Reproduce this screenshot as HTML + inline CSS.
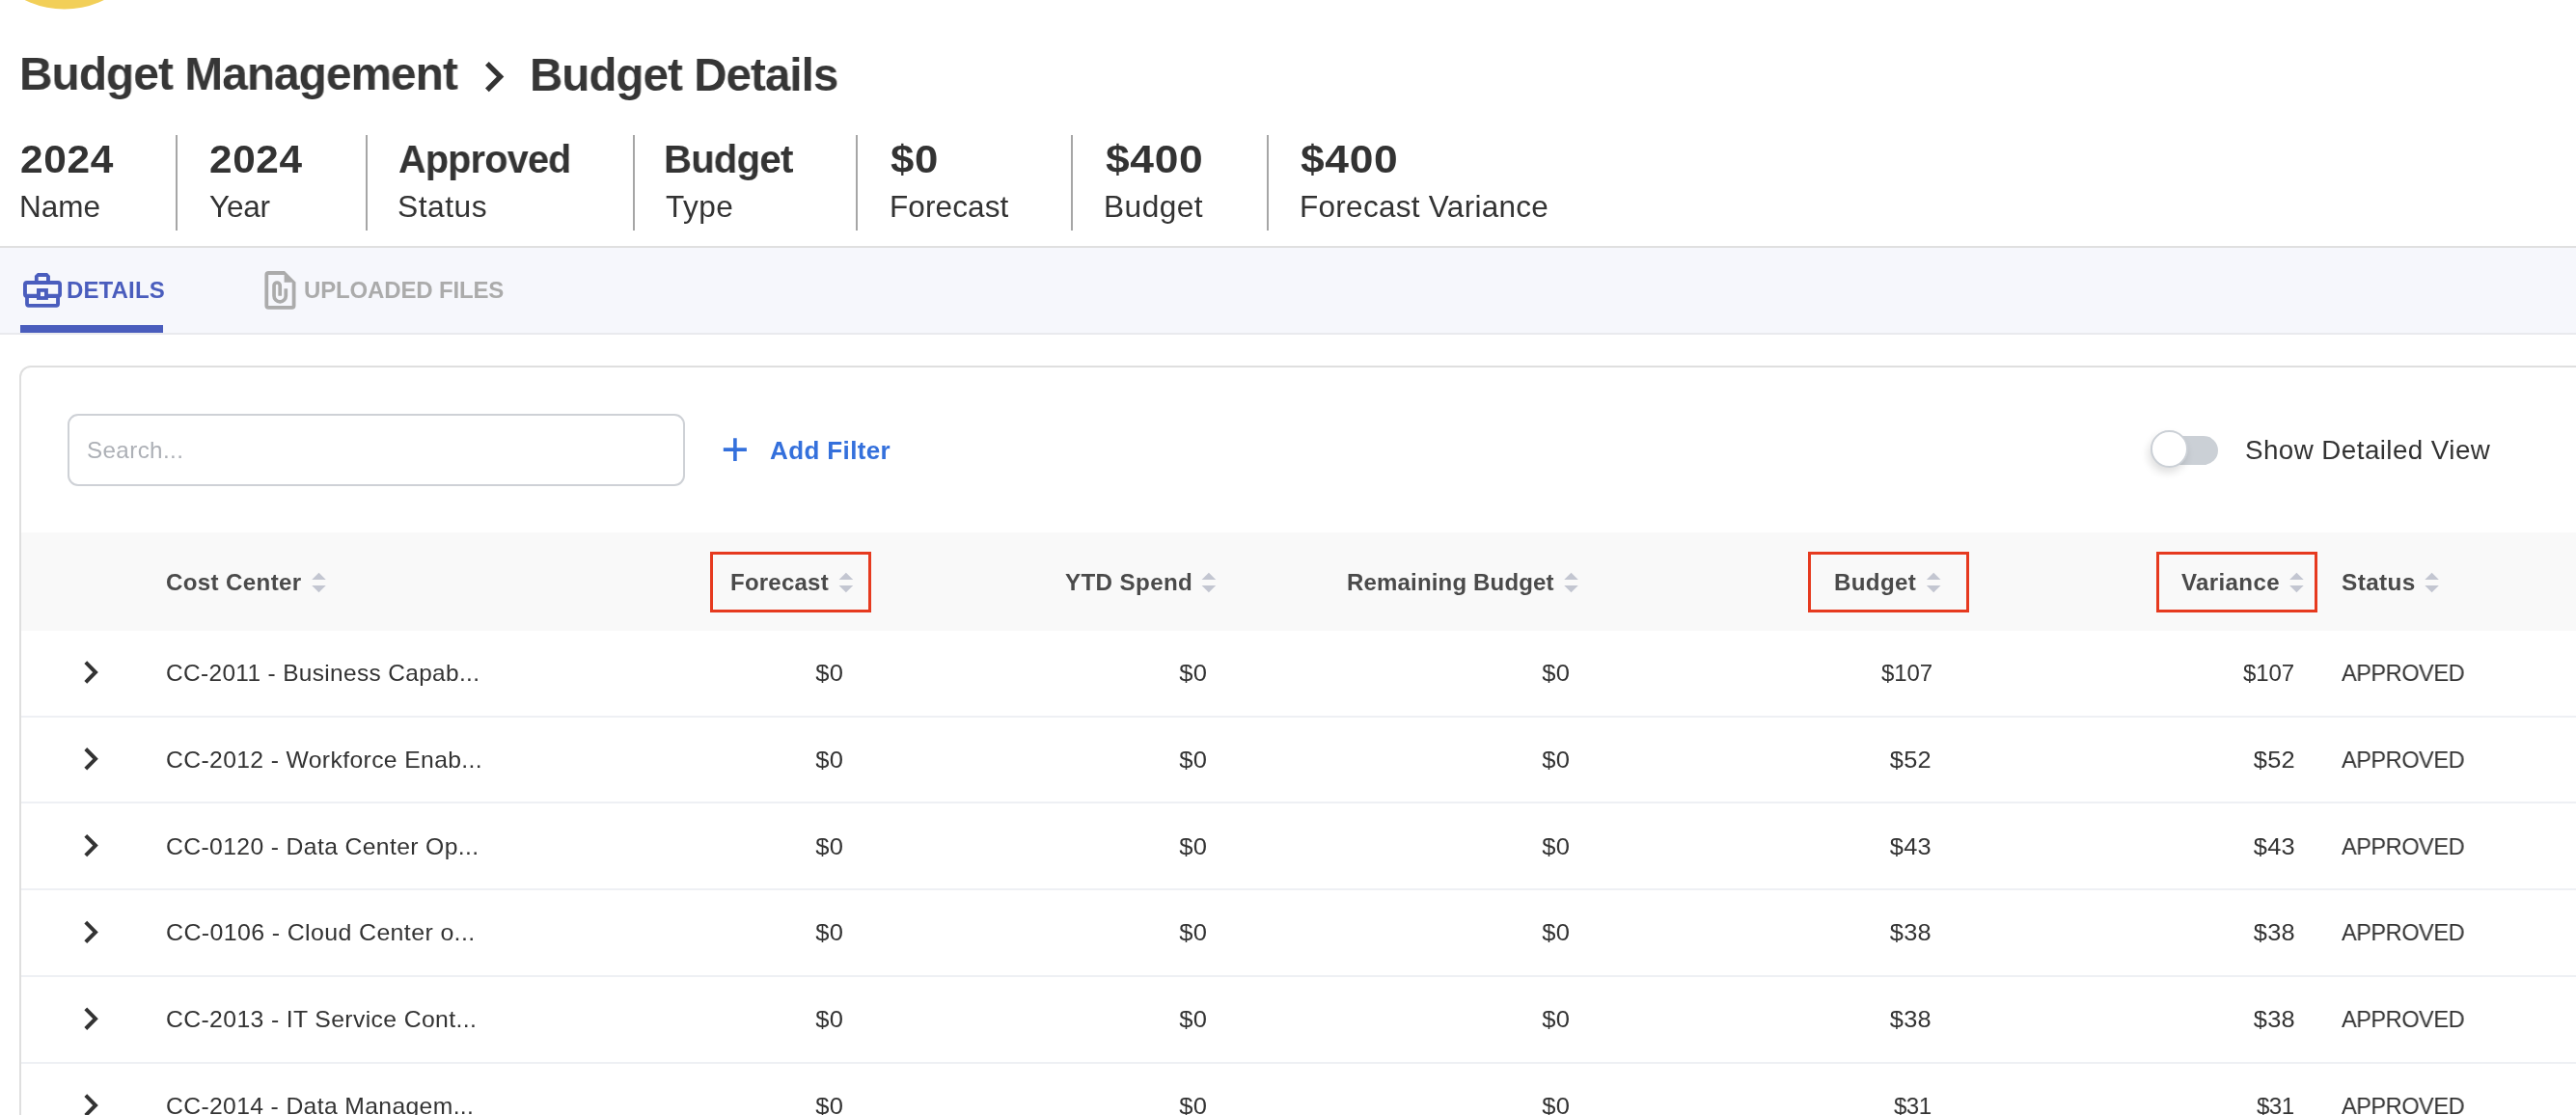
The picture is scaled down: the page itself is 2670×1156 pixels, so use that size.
<!DOCTYPE html>
<html><head><meta charset="utf-8"><style>
html,body{margin:0;padding:0;}
body{width:2670px;height:1156px;overflow:hidden;position:relative;background:#fff;font-family:"Liberation Sans",sans-serif;}
.tx{position:absolute;line-height:1;white-space:nowrap;will-change:transform;}
.sep{position:absolute;top:140px;height:99px;width:2px;background:#A6A6A6;}
.ov{position:absolute;left:0;top:0;}
#topline{position:absolute;left:0;top:255px;width:2670px;height:2px;background:#E0E0E0;}
#tabbar{position:absolute;left:0;top:257px;width:2670px;height:88px;background:#F6F7FC;}
#tabbot{position:absolute;left:0;top:345px;width:2670px;height:2px;background:#E9EAEE;}
#uline{position:absolute;left:21px;top:337px;width:148px;height:8px;background:#4A5DBD;}
#card{position:absolute;left:20px;top:379px;width:2700px;height:900px;border:2px solid #DFDFDF;border-radius:12px;box-sizing:border-box;}
#search{position:absolute;left:70px;top:429px;width:640px;height:75px;border:2px solid #CED1D6;border-radius:11px;box-sizing:border-box;}
#track{position:absolute;left:2233px;top:452px;width:66px;height:30px;border-radius:15px;background:#CBD0D6;}
#knob{position:absolute;left:2229px;top:446px;width:38.5px;height:38.5px;border-radius:50%;background:#fff;border:2px solid #CBD0D6;box-sizing:border-box;box-shadow:-2px 5px 9px rgba(0,0,0,0.13);}
#thead{position:absolute;left:22px;top:552px;width:2648px;height:102px;background:#F9F9F9;}
.rbox{position:absolute;top:572px;width:167px;height:63px;border:3px solid #E63A1F;box-sizing:border-box;}
</style></head><body>
<div id="topline"></div>
<div id="tabbar"></div>
<div id="tabbot"></div>
<div id="uline"></div>
<div id="card"></div>
<div id="search"></div>
<div id="track"></div>
<div id="knob"></div>
<div id="thead"></div>

<div class="sep" style="left:182px"></div><div class="sep" style="left:379px"></div><div class="sep" style="left:656px"></div><div class="sep" style="left:887px"></div><div class="sep" style="left:1110px"></div><div class="sep" style="left:1313px"></div>
<div class="rbox" style="left:736px"></div>
<div class="rbox" style="left:1874px"></div>
<div class="rbox" style="left:2235px"></div>
<svg class="ov" width="2670" height="1156" viewBox="0 0 2670 1156">
<circle cx="66.75" cy="-83.4" r="93" fill="#F2CF58"/>
<path d="M504.9 65.8 L518.6 79.6 L504.9 93.4" fill="none" stroke="#333" stroke-width="5.3"/>
<g fill="#4A5DBD" fill-rule="evenodd">
<path d="M39 283.1 L49 283.1 L51.9 286 L51.9 292 L48 292 L48 286.9 L39.7 286.9 L39.7 292 L35.9 292 L35.9 286 Z"/>
<path d="M28 290.9 L60 290.9 Q64 290.9 64 294.9 L64 304.9 Q64 308.9 60 308.9 L28 308.9 Q24 308.9 24 304.9 L24 294.9 Q24 290.9 28 290.9 Z M27.9 294.9 L27.9 304.8 L60.2 304.8 L60.2 294.9 Z"/>
<path d="M26.1 306 L29.9 306 L29.9 314.9 L58.1 314.9 L58.1 306 L62 306 L62 315 Q62 318.7 58.3 318.7 L29.8 318.7 Q26.1 318.7 26.1 315 Z"/>
<path d="M38 299 L49.9 299 L49.9 310.9 L38 310.9 Z"/>
</g><rect x="42" y="302.8" width="4" height="4.3" fill="#F6F7FC"/>
<path fill="#ABABAB" fill-rule="evenodd" d="M278.4 281.05 L295 281.05 L306.5 292.55 L306.5 316.7 Q306.5 320.7 302.5 320.7 L278.4 320.7 Q274.4 320.7 274.4 316.7 L274.4 285.05 Q274.4 281.05 278.4 281.05 Z M278.2 284.9 L294.6 284.9 L294.6 292.7 L302.7 292.7 L302.7 316.9 L278.2 316.9 Z"/>
<path d="M290.2 306.8 L290.2 295.9 A3.08 3.08 0 0 0 284.05 295.9 L284.05 306.7 A6.12 6.12 0 0 0 296.3 306.7 L296.3 299.2" fill="none" stroke="#ABABAB" stroke-width="3.7"/>
<path d="M761.9 454.3 L761.9 477.9 M749.8 466.1 L773.9 466.1" stroke="#3470DC" stroke-width="3.6"/>
<path d="M323.20 601.00 L330.50 593.70 L337.80 601.00 Z M323.20 607.00 L337.80 607.00 L330.50 614.30 Z" fill="#C3C6D1"/><path d="M869.60 601.00 L876.90 593.70 L884.20 601.00 Z M869.60 607.00 L884.20 607.00 L876.90 614.30 Z" fill="#C3C6D1"/><path d="M1245.60 601.00 L1252.90 593.70 L1260.20 601.00 Z M1245.60 607.00 L1260.20 607.00 L1252.90 614.30 Z" fill="#C3C6D1"/><path d="M1621.20 601.00 L1628.50 593.70 L1635.80 601.00 Z M1621.20 607.00 L1635.80 607.00 L1628.50 614.30 Z" fill="#C3C6D1"/><path d="M1996.90 601.00 L2004.20 593.70 L2011.50 601.00 Z M1996.90 607.00 L2011.50 607.00 L2004.20 614.30 Z" fill="#C3C6D1"/><path d="M2373.10 601.00 L2380.40 593.70 L2387.70 601.00 Z M2373.10 607.00 L2387.70 607.00 L2380.40 614.30 Z" fill="#C3C6D1"/><path d="M2513.30 601.00 L2520.60 593.70 L2527.90 601.00 Z M2513.30 607.00 L2527.90 607.00 L2520.60 614.30 Z" fill="#C3C6D1"/>
<path d="M88.8 686.70 L99 697.00 L88.8 707.30" fill="none" stroke="#333" stroke-width="4"/><path d="M88.8 776.50 L99 786.80 L88.8 797.10" fill="none" stroke="#333" stroke-width="4"/><path d="M88.8 866.30 L99 876.60 L88.8 886.90" fill="none" stroke="#333" stroke-width="4"/><path d="M88.8 956.10 L99 966.40 L88.8 976.70" fill="none" stroke="#333" stroke-width="4"/><path d="M88.8 1045.90 L99 1056.20 L88.8 1066.50" fill="none" stroke="#333" stroke-width="4"/><path d="M88.8 1135.70 L99 1146.00 L88.8 1156.30" fill="none" stroke="#333" stroke-width="4"/>
<rect x="22" y="742" width="2648" height="2" fill="#EEF0F4"/><rect x="22" y="831" width="2648" height="2" fill="#EEF0F4"/><rect x="22" y="921" width="2648" height="2" fill="#EEF0F4"/><rect x="22" y="1011" width="2648" height="2" fill="#EEF0F4"/><rect x="22" y="1101" width="2648" height="2" fill="#EEF0F4"/></svg>
<div class="tx" id="t1" style="top:52.00px;font-size:48.50px;font-weight:700;color:#363636;letter-spacing:-0.970px;transform:scaleX(0.9858);transform-origin:left center;left:20.00px;">Budget Management</div>
<div class="tx" id="t2" style="top:53.00px;font-size:48.50px;font-weight:700;color:#363636;letter-spacing:-0.970px;transform:scaleX(0.9796);transform-origin:left center;left:548.50px;">Budget Details</div>
<div class="tx" id="v1" style="top:145.00px;font-size:40.50px;font-weight:700;color:#333;letter-spacing:0.607px;transform:scaleX(1.0480);transform-origin:left center;left:21.20px;">2024</div>
<div class="tx" id="v2" style="top:145.00px;font-size:40.50px;font-weight:700;color:#333;letter-spacing:0.607px;transform:scaleX(1.0441);transform-origin:left center;left:216.80px;">2024</div>
<div class="tx" id="v3" style="top:145.00px;font-size:40.50px;font-weight:700;color:#333;letter-spacing:-0.810px;transform:scaleX(0.9781);transform-origin:left center;left:413.00px;">Approved</div>
<div class="tx" id="v4" style="top:145.00px;font-size:40.50px;font-weight:700;color:#333;letter-spacing:-0.810px;transform:scaleX(0.9913);transform-origin:left center;left:687.90px;">Budget</div>
<div class="tx" id="v5" style="top:145.00px;font-size:40.50px;font-weight:700;color:#333;letter-spacing:0.607px;transform:scaleX(1.0799);transform-origin:left center;left:922.50px;">$0</div>
<div class="tx" id="v6" style="top:145.00px;font-size:40.50px;font-weight:700;color:#333;letter-spacing:0.607px;transform:scaleX(1.0958);transform-origin:left center;left:1145.70px;">$400</div>
<div class="tx" id="v7" style="top:145.00px;font-size:40.50px;font-weight:700;color:#333;letter-spacing:0.607px;transform:scaleX(1.0958);transform-origin:left center;left:1347.90px;">$400</div>
<div class="tx" id="l1" style="top:199.00px;font-size:31.50px;font-weight:400;color:#333;letter-spacing:0.000px;left:19.90px;">Name</div>
<div class="tx" id="l2" style="top:199.00px;font-size:31.50px;font-weight:400;color:#333;letter-spacing:-0.200px;left:217.10px;">Year</div>
<div class="tx" id="l3" style="top:199.00px;font-size:31.50px;font-weight:400;color:#333;letter-spacing:0.472px;transform:scaleX(1.0095);transform-origin:left center;left:412.40px;">Status</div>
<div class="tx" id="l4" style="top:199.00px;font-size:31.50px;font-weight:400;color:#333;letter-spacing:0.472px;transform:scaleX(1.0028);transform-origin:left center;left:690.00px;">Type</div>
<div class="tx" id="l5" style="top:199.00px;font-size:31.50px;font-weight:400;color:#333;letter-spacing:0.114px;left:922.20px;">Forecast</div>
<div class="tx" id="l6" style="top:199.00px;font-size:31.50px;font-weight:400;color:#333;letter-spacing:0.472px;transform:scaleX(1.0044);transform-origin:left center;left:1144.40px;">Budget</div>
<div class="tx" id="l7" style="top:199.00px;font-size:31.50px;font-weight:400;color:#333;letter-spacing:0.287px;left:1347.20px;">Forecast Variance</div>
<div class="tx" id="tab1" style="top:289.00px;font-size:24.00px;font-weight:700;color:#4A5DBD;letter-spacing:0.133px;left:69.00px;">DETAILS</div>
<div class="tx" id="tab2" style="top:289.00px;font-size:24.00px;font-weight:700;color:#ABABAB;letter-spacing:-0.154px;left:315.00px;">UPLOADED FILES</div>
<div class="tx" id="srch" style="top:455.00px;font-size:24.00px;font-weight:400;color:#ADB0B6;letter-spacing:0.360px;transform:scaleX(1.0097);transform-origin:left center;left:89.90px;">Search...</div>
<div class="tx" id="addf" style="top:454.00px;font-size:26.00px;font-weight:700;color:#3470DC;letter-spacing:0.378px;left:797.80px;">Add Filter</div>
<div class="tx" id="sdv" style="top:453.00px;font-size:27.50px;font-weight:400;color:#333;letter-spacing:0.412px;transform:scaleX(1.0112);transform-origin:left center;left:2327.40px;">Show Detailed View</div>
<div class="tx" id="h1" style="top:592.00px;font-size:24.00px;font-weight:700;color:#4A4A4A;letter-spacing:0.360px;transform:scaleX(1.0044);transform-origin:left center;left:171.50px;">Cost Center</div>
<div class="tx" id="h2" style="top:592.00px;font-size:24.00px;font-weight:700;color:#4A4A4A;letter-spacing:0.229px;left:756.50px;">Forecast</div>
<div class="tx" id="h3" style="top:592.00px;font-size:24.00px;font-weight:700;color:#4A4A4A;letter-spacing:0.360px;transform:scaleX(1.0072);transform-origin:left center;left:1103.70px;">YTD Spend</div>
<div class="tx" id="h4" style="top:592.00px;font-size:24.00px;font-weight:700;color:#4A4A4A;letter-spacing:0.173px;left:1395.50px;">Remaining Budget</div>
<div class="tx" id="h5" style="top:592.00px;font-size:24.00px;font-weight:700;color:#4A4A4A;letter-spacing:0.360px;transform:scaleX(1.0048);transform-origin:left center;left:1901.00px;">Budget</div>
<div class="tx" id="h6" style="top:592.00px;font-size:24.00px;font-weight:700;color:#4A4A4A;letter-spacing:0.360px;transform:scaleX(1.0028);transform-origin:left center;left:2261.00px;">Variance</div>
<div class="tx" id="h7" style="top:592.00px;font-size:24.00px;font-weight:700;color:#4A4A4A;letter-spacing:0.360px;transform:scaleX(1.0166);transform-origin:left center;left:2426.50px;">Status</div>
<div class="tx" id="r0c" style="top:686.00px;font-size:24.00px;font-weight:400;color:#333;letter-spacing:0.360px;transform:scaleX(1.0166);transform-origin:left center;left:171.50px;">CC-2011 - Business Capab...</div>
<div class="tx" id="r0n0" style="top:686.00px;font-size:24.00px;font-weight:400;color:#333;letter-spacing:0.360px;transform:scaleX(1.0637);transform-origin:right center;right:1795.72px;">$0</div>
<div class="tx" id="r0n1" style="top:686.00px;font-size:24.00px;font-weight:400;color:#333;letter-spacing:0.360px;transform:scaleX(1.0637);transform-origin:right center;right:1418.92px;">$0</div>
<div class="tx" id="r0n2" style="top:686.00px;font-size:24.00px;font-weight:400;color:#333;letter-spacing:0.360px;transform:scaleX(1.0637);transform-origin:right center;right:1042.92px;">$0</div>
<div class="tx" id="r0n3" style="top:686.00px;font-size:24.00px;font-weight:400;color:#333;letter-spacing:-0.067px;right:667.37px;">$107</div>
<div class="tx" id="r0n4" style="top:686.00px;font-size:24.00px;font-weight:400;color:#333;letter-spacing:-0.067px;right:291.57px;">$107</div>
<div class="tx" id="r0s" style="top:686.00px;font-size:24.00px;font-weight:400;color:#333;letter-spacing:-0.480px;transform:scaleX(0.9811);transform-origin:left center;left:2427.00px;">APPROVED</div>
<div class="tx" id="r1c" style="top:776.00px;font-size:24.00px;font-weight:400;color:#333;letter-spacing:0.360px;transform:scaleX(1.0293);transform-origin:left center;left:171.50px;">CC-2012 - Workforce Enab...</div>
<div class="tx" id="r1n0" style="top:776.00px;font-size:24.00px;font-weight:400;color:#333;letter-spacing:0.360px;transform:scaleX(1.0637);transform-origin:right center;right:1795.72px;">$0</div>
<div class="tx" id="r1n1" style="top:776.00px;font-size:24.00px;font-weight:400;color:#333;letter-spacing:0.360px;transform:scaleX(1.0637);transform-origin:right center;right:1418.92px;">$0</div>
<div class="tx" id="r1n2" style="top:776.00px;font-size:24.00px;font-weight:400;color:#333;letter-spacing:0.360px;transform:scaleX(1.0637);transform-origin:right center;right:1042.92px;">$0</div>
<div class="tx" id="r1n3" style="top:776.00px;font-size:24.00px;font-weight:400;color:#333;letter-spacing:0.360px;transform:scaleX(1.0577);transform-origin:right center;right:667.92px;">$52</div>
<div class="tx" id="r1n4" style="top:776.00px;font-size:24.00px;font-weight:400;color:#333;letter-spacing:0.360px;transform:scaleX(1.0577);transform-origin:right center;right:291.12px;">$52</div>
<div class="tx" id="r1s" style="top:776.00px;font-size:24.00px;font-weight:400;color:#333;letter-spacing:-0.480px;transform:scaleX(0.9811);transform-origin:left center;left:2427.00px;">APPROVED</div>
<div class="tx" id="r2c" style="top:866.00px;font-size:24.00px;font-weight:400;color:#333;letter-spacing:0.360px;transform:scaleX(1.0297);transform-origin:left center;left:171.50px;">CC-0120 - Data Center Op...</div>
<div class="tx" id="r2n0" style="top:866.00px;font-size:24.00px;font-weight:400;color:#333;letter-spacing:0.360px;transform:scaleX(1.0637);transform-origin:right center;right:1795.72px;">$0</div>
<div class="tx" id="r2n1" style="top:866.00px;font-size:24.00px;font-weight:400;color:#333;letter-spacing:0.360px;transform:scaleX(1.0637);transform-origin:right center;right:1418.92px;">$0</div>
<div class="tx" id="r2n2" style="top:866.00px;font-size:24.00px;font-weight:400;color:#333;letter-spacing:0.360px;transform:scaleX(1.0637);transform-origin:right center;right:1042.92px;">$0</div>
<div class="tx" id="r2n3" style="top:866.00px;font-size:24.00px;font-weight:400;color:#333;letter-spacing:0.360px;transform:scaleX(1.0577);transform-origin:right center;right:667.92px;">$43</div>
<div class="tx" id="r2n4" style="top:866.00px;font-size:24.00px;font-weight:400;color:#333;letter-spacing:0.360px;transform:scaleX(1.0577);transform-origin:right center;right:291.12px;">$43</div>
<div class="tx" id="r2s" style="top:866.00px;font-size:24.00px;font-weight:400;color:#333;letter-spacing:-0.480px;transform:scaleX(0.9811);transform-origin:left center;left:2427.00px;">APPROVED</div>
<div class="tx" id="r3c" style="top:955.00px;font-size:24.00px;font-weight:400;color:#333;letter-spacing:0.360px;transform:scaleX(1.0389);transform-origin:left center;left:171.50px;">CC-0106 - Cloud Center o...</div>
<div class="tx" id="r3n0" style="top:955.00px;font-size:24.00px;font-weight:400;color:#333;letter-spacing:0.360px;transform:scaleX(1.0637);transform-origin:right center;right:1795.72px;">$0</div>
<div class="tx" id="r3n1" style="top:955.00px;font-size:24.00px;font-weight:400;color:#333;letter-spacing:0.360px;transform:scaleX(1.0637);transform-origin:right center;right:1418.92px;">$0</div>
<div class="tx" id="r3n2" style="top:955.00px;font-size:24.00px;font-weight:400;color:#333;letter-spacing:0.360px;transform:scaleX(1.0637);transform-origin:right center;right:1042.92px;">$0</div>
<div class="tx" id="r3n3" style="top:955.00px;font-size:24.00px;font-weight:400;color:#333;letter-spacing:0.360px;transform:scaleX(1.0577);transform-origin:right center;right:667.92px;">$38</div>
<div class="tx" id="r3n4" style="top:955.00px;font-size:24.00px;font-weight:400;color:#333;letter-spacing:0.360px;transform:scaleX(1.0577);transform-origin:right center;right:291.12px;">$38</div>
<div class="tx" id="r3s" style="top:955.00px;font-size:24.00px;font-weight:400;color:#333;letter-spacing:-0.480px;transform:scaleX(0.9811);transform-origin:left center;left:2427.00px;">APPROVED</div>
<div class="tx" id="r4c" style="top:1045.00px;font-size:24.00px;font-weight:400;color:#333;letter-spacing:0.360px;transform:scaleX(1.0314);transform-origin:left center;left:171.50px;">CC-2013 - IT Service Cont...</div>
<div class="tx" id="r4n0" style="top:1045.00px;font-size:24.00px;font-weight:400;color:#333;letter-spacing:0.360px;transform:scaleX(1.0637);transform-origin:right center;right:1795.72px;">$0</div>
<div class="tx" id="r4n1" style="top:1045.00px;font-size:24.00px;font-weight:400;color:#333;letter-spacing:0.360px;transform:scaleX(1.0637);transform-origin:right center;right:1418.92px;">$0</div>
<div class="tx" id="r4n2" style="top:1045.00px;font-size:24.00px;font-weight:400;color:#333;letter-spacing:0.360px;transform:scaleX(1.0637);transform-origin:right center;right:1042.92px;">$0</div>
<div class="tx" id="r4n3" style="top:1045.00px;font-size:24.00px;font-weight:400;color:#333;letter-spacing:0.360px;transform:scaleX(1.0577);transform-origin:right center;right:667.92px;">$38</div>
<div class="tx" id="r4n4" style="top:1045.00px;font-size:24.00px;font-weight:400;color:#333;letter-spacing:0.360px;transform:scaleX(1.0577);transform-origin:right center;right:291.12px;">$38</div>
<div class="tx" id="r4s" style="top:1045.00px;font-size:24.00px;font-weight:400;color:#333;letter-spacing:-0.480px;transform:scaleX(0.9811);transform-origin:left center;left:2427.00px;">APPROVED</div>
<div class="tx" id="r5c" style="top:1135.00px;font-size:24.00px;font-weight:400;color:#333;letter-spacing:0.360px;transform:scaleX(1.0285);transform-origin:left center;left:171.50px;">CC-2014 - Data Managem...</div>
<div class="tx" id="r5n0" style="top:1135.00px;font-size:24.00px;font-weight:400;color:#333;letter-spacing:0.360px;transform:scaleX(1.0637);transform-origin:right center;right:1795.72px;">$0</div>
<div class="tx" id="r5n1" style="top:1135.00px;font-size:24.00px;font-weight:400;color:#333;letter-spacing:0.360px;transform:scaleX(1.0637);transform-origin:right center;right:1418.92px;">$0</div>
<div class="tx" id="r5n2" style="top:1135.00px;font-size:24.00px;font-weight:400;color:#333;letter-spacing:0.360px;transform:scaleX(1.0637);transform-origin:right center;right:1042.92px;">$0</div>
<div class="tx" id="r5n3" style="top:1135.00px;font-size:24.00px;font-weight:400;color:#333;letter-spacing:-0.480px;transform:scaleX(0.9990);transform-origin:right center;right:668.78px;">$31</div>
<div class="tx" id="r5n4" style="top:1135.00px;font-size:24.00px;font-weight:400;color:#333;letter-spacing:-0.480px;transform:scaleX(0.9990);transform-origin:right center;right:291.98px;">$31</div>
<div class="tx" id="r5s" style="top:1135.00px;font-size:24.00px;font-weight:400;color:#333;letter-spacing:-0.480px;transform:scaleX(0.9811);transform-origin:left center;left:2427.00px;">APPROVED</div>
</body></html>
